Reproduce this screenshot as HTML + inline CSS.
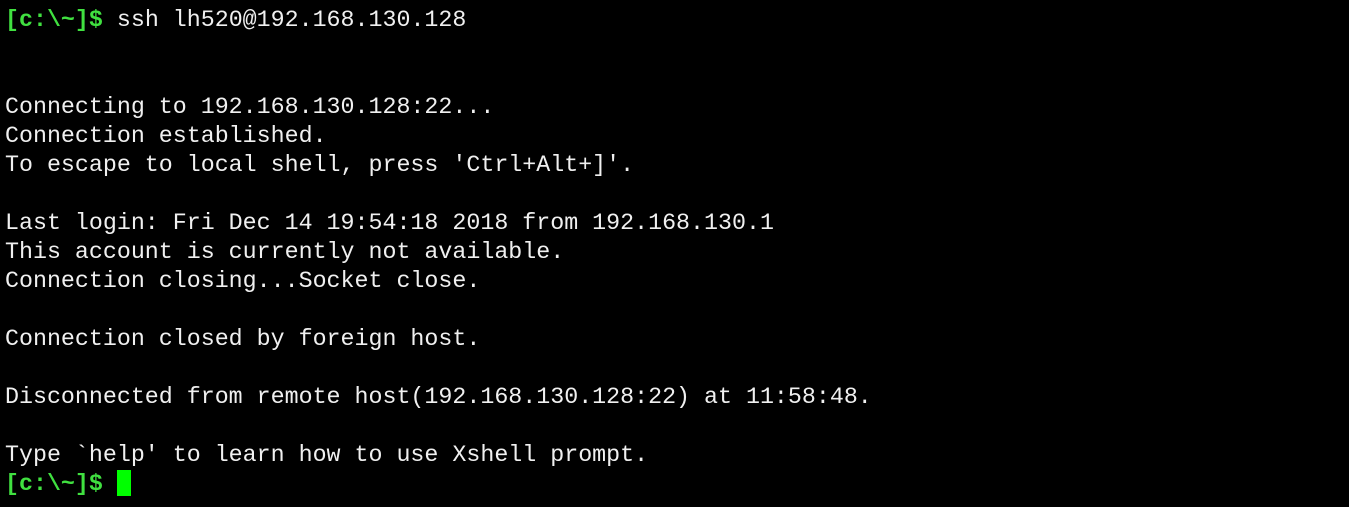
<!DOCTYPE html>
<html><head><style>
html,body{margin:0;padding:0;background:#000;width:1349px;height:507px;overflow:hidden}
pre{margin:0;padding:6px 0 0 5px;font-family:"Liberation Mono",monospace;font-size:23.3px;line-height:29px;color:#f0f0f0;white-space:pre}
.g{color:#40e040;font-weight:bold}
.c{display:inline-block;width:14px;height:26px;background:#00ff00;vertical-align:-6px}
</style></head><body><pre><span class="g">[c:\~]$</span> ssh lh520@192.168.130.128


Connecting to 192.168.130.128:22...
Connection established.
To escape to local shell, press 'Ctrl+Alt+]'.

Last login: Fri Dec 14 19:54:18 2018 from 192.168.130.1
This account is currently not available.
Connection closing...Socket close.

Connection closed by foreign host.

Disconnected from remote host(192.168.130.128:22) at 11:58:48.

Type `help' to learn how to use Xshell prompt.
<span class="g">[c:\~]$</span> <span class="c"></span></pre></body></html>
